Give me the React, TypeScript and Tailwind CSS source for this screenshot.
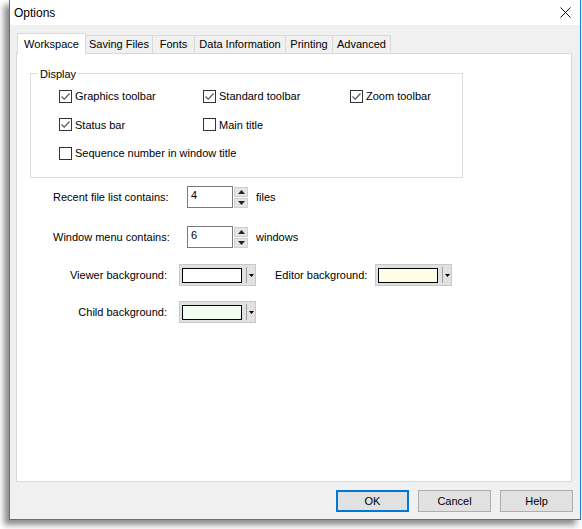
import React from 'react';

const font = { fontFamily: '"Liberation Sans", Arial, sans-serif' };

function Check({ checked, label }: { checked?: boolean; label: string }) {
  return (
    <div className="flex items-center gap-[3px]">
      <span className="w-[13px] h-[13px] border border-[#333333] bg-white flex items-center justify-center">
        {checked && (
          <svg width="11" height="11" viewBox="0 0 11 11">
            <path d="M1.5 5.5 L4.2 8.2 L9.5 2.5" fill="none" stroke="#555555" strokeWidth="1.2" />
          </svg>
        )}
      </span>
      <span>{label}</span>
    </div>
  );
}

function Spin({ value }: { value: string }) {
  return (
    <div className="flex items-start gap-[1px]">
      <div className="w-[46px] h-[22px] border border-[#7a7a7a] bg-white pl-[3px] pt-[1px] leading-[14px]">{value}</div>
      <div className="flex flex-col gap-[1px] mt-[1px]">
        <div className="w-[14px] h-[10px] bg-[#e5e5e5] border border-[#cfcfcf] flex items-center justify-center">
          <svg width="7" height="4" viewBox="0 0 7 4"><path d="M0 4 L3.5 0 L7 4 Z" fill="#222" /></svg>
        </div>
        <div className="w-[14px] h-[10px] bg-[#e5e5e5] border border-[#cfcfcf] flex items-center justify-center">
          <svg width="7" height="4" viewBox="0 0 7 4"><path d="M0 0 L3.5 4 L7 0 Z" fill="#222" /></svg>
        </div>
      </div>
    </div>
  );
}

function ColorBox({ color }: { color: string }) {
  return (
    <div className="w-[77px] h-[22px] bg-[#e1e1e1] border border-[#c8c8c8] flex items-center pl-[2px]">
      <div className="w-[60px] h-[15px] border border-black" style={{ backgroundColor: color }} />
      <div className="w-[1px] h-[16px] bg-[#a0a0a0] ml-[4px]" />
      <div className="flex-1 flex justify-center">
        <svg width="5" height="3" viewBox="0 0 5 3"><path d="M0 0 L2.5 3 L5 0 Z" fill="#000" /></svg>
      </div>
    </div>
  );
}

const tabs = [
  { name: 'Workspace', w: 'w-[69px]' },
  { name: 'Saving Files', w: 'w-[67px]' },
  { name: 'Fonts', w: 'w-[42px]' },
  { name: 'Data Information', w: 'w-[91px]' },
  { name: 'Printing', w: 'w-[47px]' },
  { name: 'Advanced', w: 'w-[58px]' },
];

export default function App() {
  return (
    <div className="w-[582px] h-[529px] bg-white overflow-hidden text-[11px] text-black" style={font}>
      <div className="ml-[9px] w-[572px] h-[520px] bg-[#f0f0f0] border-x border-b border-[#1883d7] flex flex-col shadow-[-5px_5px_6px_rgba(0,0,0,0.45)]">
        {/* title bar */}
        <div className="h-[25px] bg-white flex items-center justify-between pl-[4px] pr-[9px]">
          <span className="text-[12px]">Options</span>
          <svg width="11" height="11" viewBox="0 0 11 11">
            <path d="M0.5 0.5 L10.5 10.5 M10.5 0.5 L0.5 10.5" stroke="#111" strokeWidth="1" />
          </svg>
        </div>

        {/* tabs */}
        <div className="flex items-end pl-[7px] mt-[8px] h-[20px]">
          {tabs.map((t, i) =>
            i === 0 ? (
              <div key={t.name} className={`${t.w} h-[21px] bg-white border-x border-t border-[#d9d9d9] flex items-center justify-center relative z-10 -mb-[1px]`}>
                {t.name}
              </div>
            ) : (
              <div key={t.name} className={`${t.w} h-[18px] bg-[#f0f0f0] border-r border-t border-[#d9d9d9] flex items-center justify-center`}>
                {t.name}
              </div>
            )
          )}
        </div>

        {/* panel */}
        <div className="ml-[6px] w-[556px] h-[429px] bg-white border border-[#d9d9d9] pt-[19px] pl-[13px]">
          <div className="relative w-[433px] h-[105px] border border-[#dcdcdc] pt-[14px] pl-[28px]">
            <span className="absolute -top-[8px] left-[7px] bg-white px-[2px]">Display</span>
            <div className="flex flex-col gap-[12px]">
              <div className="flex">
                <div className="w-[144px]"><Check checked label="Graphics toolbar" /></div>
                <div className="w-[147px]"><Check checked label="Standard toolbar" /></div>
                <Check checked label="Zoom toolbar" />
              </div>
              <div className="flex">
                <div className="w-[144px]"><Check checked label="Status bar" /></div>
                <Check label="Main title" />
              </div>
              <Check label="Sequence number in window title" />
            </div>
          </div>

          <div className="flex items-center mt-[8px] pl-[23px]">
            <span className="w-[134px]">Recent file list contains:</span>
            <Spin value="4" />
            <span className="ml-[8px]">files</span>
          </div>
          <div className="flex items-center mt-[18px] pl-[23px]">
            <span className="w-[134px]">Window menu contains:</span>
            <Spin value="6" />
            <span className="ml-[8px]">windows</span>
          </div>

          <div className="flex items-center mt-[16px]">
            <span className="w-[137px] text-right">Viewer background:</span>
            <span className="w-[12px]" />
            <ColorBox color="#ffffff" />
            <span className="ml-[19px] w-[100px]">Editor background:</span>
            <ColorBox color="#fffde6" />
          </div>
          <div className="flex items-center mt-[15px]">
            <span className="w-[137px] text-right">Child background:</span>
            <span className="w-[12px]" />
            <ColorBox color="#f0fff0" />
          </div>
        </div>

        {/* buttons */}
        <div className="flex justify-end gap-[9px] pr-[7px] mt-[8px]">
          <button className="w-[73px] h-[22px] bg-[#e1e1e1] border-2 border-[#0078d7]">OK</button>
          <button className="w-[73px] h-[22px] bg-[#e1e1e1] border border-[#adadad]">Cancel</button>
          <button className="w-[73px] h-[22px] bg-[#e1e1e1] border border-[#adadad]">Help</button>
        </div>
      </div>
    </div>
  );
}
